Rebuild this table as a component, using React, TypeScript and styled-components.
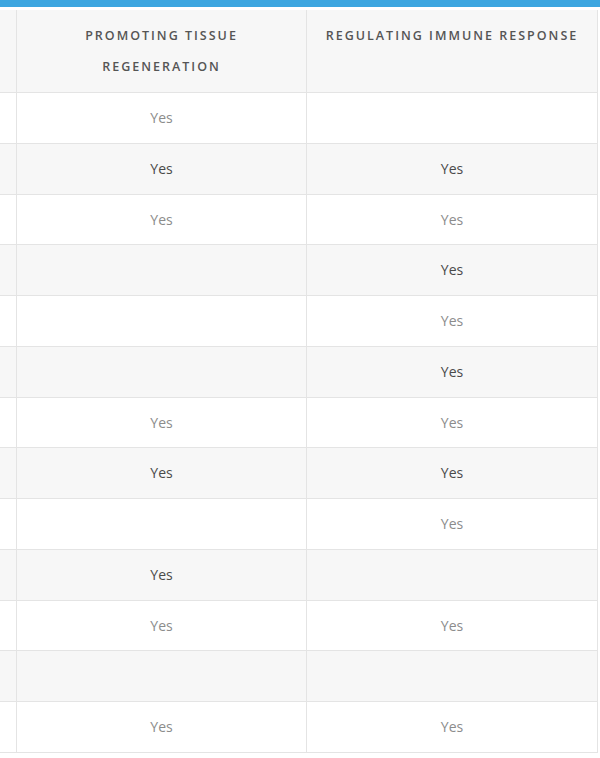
import styled, { createGlobalStyle } from "styled-components";

const GlobalStyle = createGlobalStyle`
  body {
    margin: 0;
    background: #ffffff;
    font-family: "Open Sans", "Liberation Sans", sans-serif;
  }
`;

const TopBar = styled.div`
  height: 7px;
  background: #3da6e0;
  margin-bottom: 3px;
`;

const Table = styled.table`
  width: 598px;
  table-layout: fixed;
  border-collapse: separate;
  border-spacing: 0;
`;

const HeadCell = styled.th`
  background: #f7f7f7;
  border-right: 1px solid #e4e4e4;
  border-bottom: 1px solid #e4e4e4;
  padding: 10px 12px;
  vertical-align: top;
  text-align: center;
  font-size: 12.5px;
  font-weight: 600;
  line-height: 31px;
  letter-spacing: 2px;
  text-transform: uppercase;
  color: #555555;
`;

const Row = styled.tr<{ $shaded: boolean }>`
  background: ${({ $shaded }) => ($shaded ? "#f7f7f7" : "#ffffff")};
  color: ${({ $shaded }) => ($shaded ? "#4a4a4a" : "#8c8c8c")};
`;

const Cell = styled.td`
  border-right: 1px solid #e4e4e4;
  border-bottom: 1px solid #e4e4e4;
  padding: 15px 10px;
  text-align: center;
  font-size: 14px;
  line-height: 19.77px;
  overflow: hidden;
  white-space: nowrap;
`;

// [tissue regeneration, immune response]
const rows: [boolean, boolean][] = [
  [true, false],
  [true, true],
  [true, true],
  [false, true],
  [false, true],
  [false, true],
  [true, true],
  [true, true],
  [false, true],
  [true, false],
  [true, true],
  [false, false],
  [true, true],
];

const blank = "\u00a0";

const App = () => {
  return (
    <>
      <GlobalStyle />
      <TopBar />
      <Table>
        <colgroup>
          <col style={{ width: 17 }} />
          <col style={{ width: 290 }} />
          <col style={{ width: 291 }} />
        </colgroup>
        <thead>
          <tr>
            <HeadCell />
            <HeadCell>Promoting tissue regeneration</HeadCell>
            <HeadCell>Regulating immune response</HeadCell>
          </tr>
        </thead>
        <tbody>
          {rows.map(([tissue, immune], i) => (
            <Row key={i} $shaded={i % 2 === 1}>
              <Cell>{blank}</Cell>
              <Cell>{tissue ? "Yes" : blank}</Cell>
              <Cell>{immune ? "Yes" : blank}</Cell>
            </Row>
          ))}
        </tbody>
      </Table>
    </>
  );
};

export default App;
